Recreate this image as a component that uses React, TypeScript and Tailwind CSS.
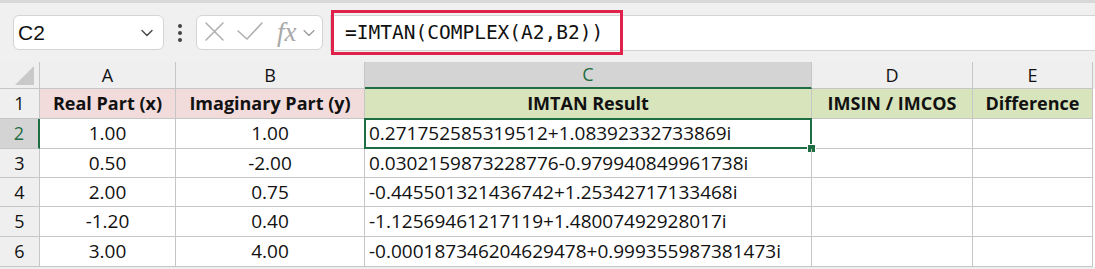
import { ChevronDown } from 'lucide-react';

const cols = [
  { key: 'A', width: 'w-[136px]' },
  { key: 'B', width: 'w-[189px]' },
  { key: 'C', width: 'w-[447px]' },
  { key: 'D', width: 'w-[161px]' },
  { key: 'E', width: 'w-[120px]' },
];

const headers = [
  { label: 'Real Part (x)', bg: 'bg-[#f2dcdb]' },
  { label: 'Imaginary Part (y)', bg: 'bg-[#f2dcdb]' },
  { label: 'IMTAN Result', bg: 'bg-[#d8e4bc]' },
  { label: 'IMSIN / IMCOS', bg: 'bg-[#d8e4bc]' },
  { label: 'Difference', bg: 'bg-[#d8e4bc]' },
];

const rows = [
  { n: 2, x: '1.00', y: '1.00', r: '0.271752585319512+1.08392332733869i', h: 'h-[30px]' },
  { n: 3, x: '0.50', y: '-2.00', r: '0.0302159873228776-0.979940849961738i', h: 'h-[29px]' },
  { n: 4, x: '2.00', y: '0.75', r: '-0.445501321436742+1.25342717133468i', h: 'h-[29px]' },
  { n: 5, x: '-1.20', y: '0.40', r: '-1.12569461217119+1.48007492928017i', h: 'h-[30px]' },
  { n: 6, x: '3.00', y: '4.00', r: '-0.000187346204629478+0.999355987381473i', h: 'h-[30px]' },
];

const App = () => {
  return (
    <div className="w-[1095px] h-[269px] overflow-hidden bg-[#eeeeee] font-['Open_Sans',sans-serif] text-[#111]">
      {/* Formula bar */}
      <div className="h-[62px] border-t-[3px] border-[#d8d8d8] bg-[#f0f0f0] flex items-center">
        <div className="ml-[13px] w-[151px] h-[35px] bg-white rounded-[6px] border border-[#d4d4d4] flex items-center justify-between pl-[4px] pr-[6px]">
          <span className="text-[21px] font-['Liberation_Sans',sans-serif]">C2</span>
          <ChevronDown size={20} strokeWidth={1.6} className="text-[#444]" />
        </div>
        <div className="w-[32px] flex flex-col items-center gap-[3px]">
          <span className="w-[4px] h-[4px] rounded-full bg-[#444]" />
          <span className="w-[4px] h-[4px] rounded-full bg-[#444]" />
          <span className="w-[4px] h-[4px] rounded-full bg-[#444]" />
        </div>
        <div className="w-[127px] h-[35px] bg-white rounded-[6px] border border-[#d4d4d4] flex items-center">
          {/* cancel / enter */}
          <svg width="70" height="35" viewBox="0 0 70 35" className="shrink-0">
            <g stroke="#b0b0b0" strokeWidth="1.6" fill="none" strokeLinecap="round" strokeLinejoin="round">
              <path d="M9 8 L26 25 M26 8 L9 25" />
              <path d="M41 16 L50 24 L65 8" />
            </g>
          </svg>
          <span className="ml-[10px] text-[27px] italic font-['Liberation_Serif',serif] leading-none text-[#a8a8a8]">fx</span>
          <ChevronDown size={20} strokeWidth={1.4} className="ml-[2px] text-[#999]" />
        </div>
        <div className="ml-[7px] flex-1 h-[36px] bg-white border-y border-l border-[#d4d4d4] flex items-center">
          <div className="h-[45px] w-[292px] border-[3px] border-[#e0224a] flex items-center pl-[11px] font-['DejaVu_Sans_Mono',monospace] text-[19.5px] text-[#111]">
            =IMTAN(COMPLEX(A2,B2))
          </div>
        </div>
      </div>

      {/* Column headers */}
      <div className="flex h-[27px] bg-[#efefef] text-[18px]">
        <div className="w-[40px] border-r border-b border-[#c6c6c6] flex items-end justify-end pr-[5px] pb-[3px]">
          <svg width="19" height="19" viewBox="0 0 19 19">
            <polygon points="19,0 19,19 0,19" fill="#c9c9c9" />
          </svg>
        </div>
        {cols.map((c) =>
          c.key === 'C' ? (
            <div
              key={c.key}
              className={`${c.width} bg-[#d4d4d4] border-r border-[#c6c6c6] border-b-2 border-b-[#1f6e43] text-[#1f6e43] flex items-center justify-center`}
            >
              {c.key}
            </div>
          ) : (
            <div
              key={c.key}
              className={`${c.width} border-r border-b border-[#c6c6c6] flex items-center justify-center`}
            >
              {c.key}
            </div>
          ),
        )}
      </div>

      {/* Row 1 */}
      <div className="flex h-[30px] bg-white">
        <div className="w-[40px] bg-[#efefef] border-r border-b border-[#c6c6c6] flex items-center justify-center text-[18px]">
          1
        </div>
        {headers.map((h, i) => (
          <div
            key={h.label}
            className={`${cols[i].width} ${h.bg} border-r border-b border-[#c6c6c6] flex items-center justify-center font-bold text-[18px] text-[#111]`}
          >
            {h.label}
          </div>
        ))}
      </div>

      {/* Data rows */}
      {rows.map((r) => (
        <div key={r.n} className={`flex ${r.h} bg-white text-[19px]`}>
          {r.n === 2 ? (
            <div className="w-[40px] bg-[#d4d4d4] border-r-2 border-r-[#1f6e43] border-b border-b-[#c6c6c6] flex items-center justify-center text-[18px] text-[#1f6e43]">
              {r.n}
            </div>
          ) : (
            <div className="w-[40px] bg-[#efefef] border-r border-b border-[#c6c6c6] flex items-center justify-center text-[18px]">
              {r.n}
            </div>
          )}
          <div className="w-[136px] border-r border-b border-[#c6c6c6] flex items-center justify-center">{r.x}</div>
          <div className="w-[189px] border-r border-b border-[#c6c6c6] flex items-center justify-center">{r.y}</div>
          <div className="relative w-[447px] border-r border-b border-[#c6c6c6] flex items-center pl-[4px]">
            {r.r}
            {r.n === 2 && (
              <>
                <div className="absolute -left-[1px] -top-[1px] -right-[1px] -bottom-[1px] border-2 border-[#1f6e43]" />
                <div className="absolute -right-[5px] -bottom-[5px] w-[9px] h-[9px] bg-[#1f6e43] border border-white" />
              </>
            )}
          </div>
          <div className="w-[161px] border-r border-b border-[#c6c6c6]" />
          <div className="w-[120px] border-r border-b border-[#c6c6c6]" />
        </div>
      ))}
    </div>
  );
};

export default App;
